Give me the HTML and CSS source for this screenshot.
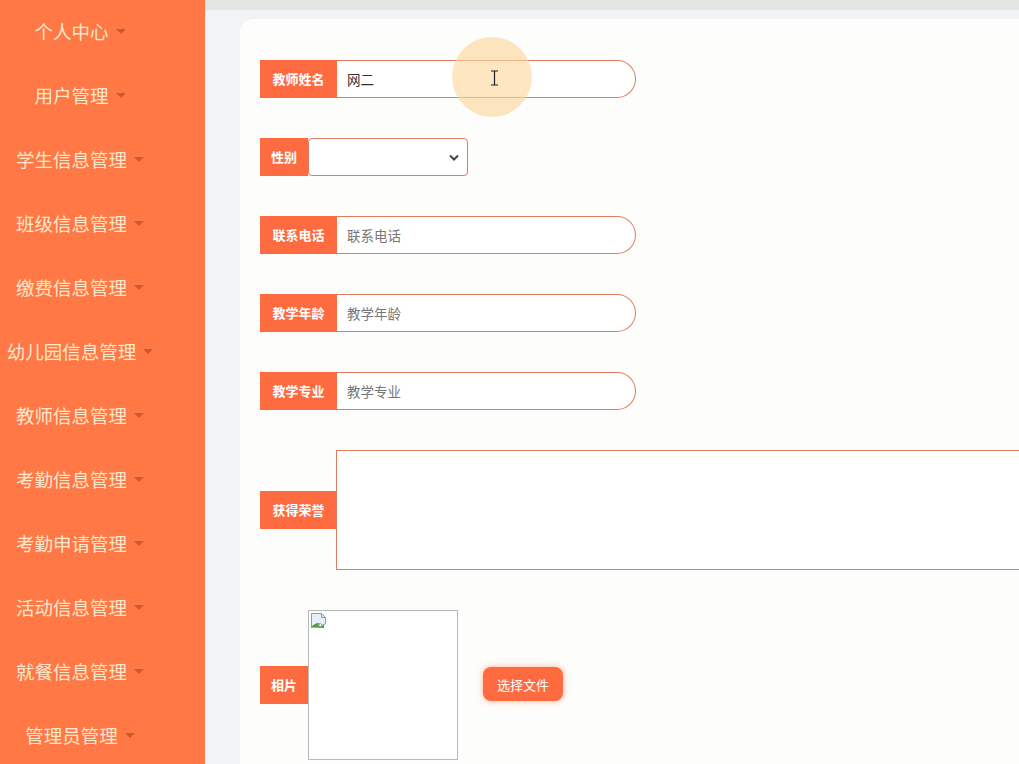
FILE: index.html
```html
<!DOCTYPE html>
<html lang="zh-CN">
<head>
    <meta charset="UTF-8" />
    <title>教师信息管理</title>
    <link rel="stylesheet" href="styles.css">
</head>
<body>
    <aside class="sidebar">
        <ul class="menu">
            <li><span>个人中心</span><i class="caret"></i></li>
            <li><span>用户管理</span><i class="caret"></i></li>
            <li><span>学生信息管理</span><i class="caret"></i></li>
            <li><span>班级信息管理</span><i class="caret"></i></li>
            <li><span>缴费信息管理</span><i class="caret"></i></li>
            <li><span>幼儿园信息管理</span><i class="caret"></i></li>
            <li><span>教师信息管理</span><i class="caret"></i></li>
            <li><span>考勤信息管理</span><i class="caret"></i></li>
            <li><span>考勤申请管理</span><i class="caret"></i></li>
            <li><span>活动信息管理</span><i class="caret"></i></li>
            <li><span>就餐信息管理</span><i class="caret"></i></li>
            <li><span>管理员管理</span><i class="caret"></i></li>
        </ul>
    </aside>

    <main class="main">
        <div class="topbar"></div>
        <div class="card">
            <div class="row">
                <label class="tag">教师姓名</label>
                <div class="field-wrap">
                    <input class="field" type="text" value="网二">
                    <span class="cursor-spot"></span>
                    <svg class="ibeam" width="9" height="16" viewBox="0 0 9 16">
                        <path d="M1 1h7M1 15h7M4.5 1v14" fill="none" stroke="#222" stroke-width="1.2"/>
                    </svg>
                </div>
            </div>
            <div class="row">
                <label class="tag tag-short">性别</label>
                <div class="select">
                    <svg width="10" height="7" viewBox="0 0 10 7"><path d="M1 1.5 5 5.5 9 1.5" fill="none" stroke="#444" stroke-width="2"/></svg>
                </div>
            </div>
            <div class="row">
                <label class="tag">联系电话</label>
                <input class="field" type="text" placeholder="联系电话">
            </div>
            <div class="row">
                <label class="tag">教学年龄</label>
                <input class="field" type="text" placeholder="教学年龄">
            </div>
            <div class="row">
                <label class="tag">教学专业</label>
                <input class="field" type="text" placeholder="教学专业">
            </div>
            <div class="row">
                <label class="tag">获得荣誉</label>
                <div class="area"></div>
            </div>
            <div class="row">
                <label class="tag tag-short">相片</label>
                <div class="photo">
                    <svg width="17" height="17" viewBox="0 0 17 17">
                        <path d="M1.5 1.5h10l4 4v6l-3 2-2-2-3 3-3-1.5-3 2.5z" fill="#e9eff6" stroke="#8f9aa5"/>
                        <path d="M1 15.5c2.5-3.5 5.5-5 9-4.5l-2 2 2.5 1.5 3.5-2.5v4z" fill="#5a9a45"/>
                        <path d="M11.5 1.5v4h4" fill="none" stroke="#8f9aa5"/>
                    </svg>
                </div>
                <button class="upload">选择文件</button>
            </div>
        </div>
    </main>
</body>
</html>
```

FILE: styles.css
```css
body {
    margin: 0;
    font-family: "Noto Sans CJK SC", "Microsoft YaHei", sans-serif;
    display: flex;
    height: 764px;
    overflow: hidden;
    background: #f2f3f5;
}
.sidebar {
    width: 205px;
    flex-shrink: 0;
    background: #ff7845;
    height: 100%;
}
.menu {
    list-style: none;
    margin: -1px 0 0 0;
    padding: 0;
    width: 160px;
}
.menu li {
    height: 64px;
    display: flex;
    align-items: center;
    justify-content: center;
    color: #fde8cf;
    font-size: 18.5px;
}
.caret {
    display: inline-block;
    margin-left: 7px;
    width: 0;
    height: 0;
    border-left: 5px solid transparent;
    border-right: 5px solid transparent;
    border-top: 5px solid #c95a35;
}
.main {
    flex: 1;
    display: flex;
    flex-direction: column;
}
.topbar {
    height: 10px;
    background: #e4e6e3;
    flex-shrink: 0;
}
.card {
    margin: 9px 0 0 35px;
    background: #fdfdfb;
    border-radius: 14px 0 0 0;
    padding: 41px 0 0 20px;
    flex: 1;
}
.row {
    display: flex;
    align-items: center;
    margin-bottom: 40px;
}
.tag {
    background: #ff6b40;
    color: #fff;
    font-size: 13px;
    font-weight: bold;
    height: 38px;
    line-height: 38px;
    width: 77px;
    text-align: center;
    flex-shrink: 0;
    box-sizing: border-box;
}
.tag-short {
    width: 48px;
}
.field-wrap {
    position: relative;
}
.field {
    width: 299px;
    height: 38px;
    box-sizing: border-box;
    border: 1px solid #dd7d5f;
    border-left: none;
    border-radius: 0 19px 19px 0;
    background: #fff;
    padding: 0 10px;
    font-family: inherit;
    font-size: 13.5px;
    color: #333;
    outline: none;
}
.field::placeholder {
    color: #777;
}
.cursor-spot {
    position: absolute;
    left: 115px;
    top: -23px;
    width: 80px;
    height: 80px;
    border-radius: 50%;
    background: rgba(252, 214, 150, 0.6);
    pointer-events: none;
}
.ibeam {
    position: absolute;
    left: 153px;
    top: 10px;
}
.select {
    width: 160px;
    height: 38px;
    box-sizing: border-box;
    border: 1px solid #dd7d5f;
    border-radius: 4px;
    background: #fff;
    display: flex;
    align-items: center;
    justify-content: flex-end;
    padding-right: 8px;
}
.area {
    width: 700px;
    height: 120px;
    box-sizing: border-box;
    border: 1px solid #dd7d5f;
    background: #fff;
    margin-left: -1px;
}
.photo {
    width: 150px;
    height: 150px;
    box-sizing: border-box;
    border: 1px solid #b8b8b8;
    background: #fff;
    padding: 1px;
}
.photo svg {
    display: block;
}
.upload {
    margin-left: 25px;
    margin-top: -2px;
    background: #ff6b40;
    color: #fff;
    border: none;
    border-radius: 8px;
    width: 80px;
    height: 34px;
    font-family: inherit;
    font-size: 13px;
    box-shadow: 0 0 6px rgba(255, 107, 64, 0.55);
}
```
